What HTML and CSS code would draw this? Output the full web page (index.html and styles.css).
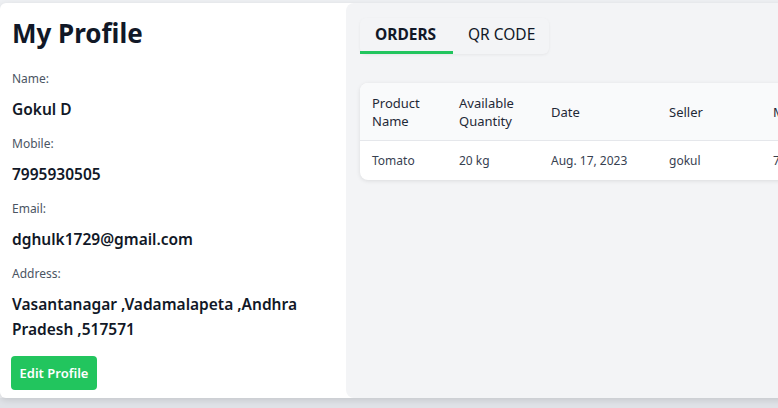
FILE: index.html
```html
<!DOCTYPE html>
<html>
<head>
<meta charset="utf-8">
<link rel="stylesheet" href="styles.css">
</head>
<body>
<div class="page">
  <div class="card">
    <section class="profile">
      <h1 class="title">My Profile</h1>
      <div class="field"><div class="label">Name:</div><div class="value">Gokul D</div></div>
      <div class="field"><div class="label">Mobile:</div><div class="value">7995930505</div></div>
      <div class="field"><div class="label">Email:</div><div class="value">dghulk1729@gmail.com</div></div>
      <div class="field"><div class="label">Address:</div><div class="value addr">Vasantanagar ,Vadamalapeta ,Andhra Pradesh ,517571</div></div>
      <button class="edit">Edit Profile</button>
    </section>
    <section class="panel">
      <div class="tabs">
        <div class="tab active">ORDERS</div>
        <div class="tab">QR CODE</div>
      </div>
      <div class="table-card">
        <table class="orders">
          <colgroup><col class="c1"><col class="c2"><col class="c3"><col class="c4"><col class="c5"></colgroup>
          <thead>
            <tr><th>Product<br>Name</th><th>Available<br>Quantity</th><th>Date</th><th>Seller</th><th>Mobile</th></tr>
          </thead>
          <tbody>
            <tr><td>Tomato</td><td>20 kg</td><td>Aug. 17, 2023</td><td>gokul</td><td>7995930505</td></tr>
          </tbody>
        </table>
      </div>
    </section>
  </div>
</div>
</body>
</html>
```
FILE: styles.css
```css
* { box-sizing: border-box; }
html, body { margin: 0; padding: 0; }
body {
  background: #dfe2e7;
  font-family: "Noto Sans", "Open Sans", sans-serif;
  color: #111827;
  width: 778px;
  height: 408px;
  overflow: hidden;
}
.page {
  background: #eef0f3;
  padding-top: 3px;
  height: 398px;
  width: 900px;
}
.card {
  background: #fff;
  border-radius: 6px;
  box-shadow: 0 2px 6px rgba(0,0,0,0.12);
  display: grid;
  grid-template-columns: 346px 1fr;
  height: 395px;
}
.profile {
  padding: 12px 12px 8px 12px;
}
.title {
  font-size: 26px;
  line-height: 36px;
  font-weight: 700;
  margin: 0 0 19px 0;
  color: #111827;
}
.field { margin-bottom: 14px; }
.label {
  font-size: 12px;
  line-height: 18px;
  color: #4b5563;
  margin-bottom: 9px;
}
.value {
  font-size: 15.5px;
  line-height: 24px;
  font-weight: 600;
  color: #111827;
}
.addr { line-height: 25px; width: 320px; }
.edit {
  display: block;
  margin-left: -1px;
  background: #22c55e;
  color: #fff;
  border: none;
  border-radius: 4px;
  font-family: inherit;
  font-size: 13px;
  font-weight: 600;
  height: 34px;
  padding: 0 8px;
  width: 86px;
}
.panel {
  background: #f3f4f6;
  border-radius: 8px 0 0 8px;
  padding: 15px 0 0 14px;
}
.tabs {
  display: inline-flex;
  height: 36px;
  background: #f3f4f6;
  border-radius: 6px;
  box-shadow: 0 1px 3px rgba(0,0,0,0.06);
}
.tab {
  font-size: 15.5px;
  line-height: 33px;
  padding: 0 14px 0 15px;
  color: #111827;
  border-bottom: 3px solid transparent;
}
.tab.active {
  font-weight: 700;
  border-bottom-color: #22c55e;
  padding: 0 15px;
  width: 93px;
}
.table-card {
  margin-top: 29px;
  background: #fff;
  border-radius: 8px;
  box-shadow: 0 1px 4px rgba(0,0,0,0.1);
  overflow: hidden;
  width: 620px;
}
.orders {
  border-collapse: collapse;
  table-layout: fixed;
  width: 620px;
}
.c1 { width: 87px; }
.c2 { width: 92px; }
.c3 { width: 118px; }
.c4 { width: 104px; }
.c5 { width: 219px; }
.orders th {
  background: #f9fafb;
  text-align: left;
  font-weight: 400;
  font-size: 13px;
  line-height: 18px;
  color: #1f2937;
  height: 57px;
  padding: 1px 12px 0 12px;
  border-bottom: 1px solid #e5e7eb;
}
.orders td {
  font-size: 12px;
  color: #374151;
  height: 40px;
  padding: 1px 12px 0 12px;
}
```
